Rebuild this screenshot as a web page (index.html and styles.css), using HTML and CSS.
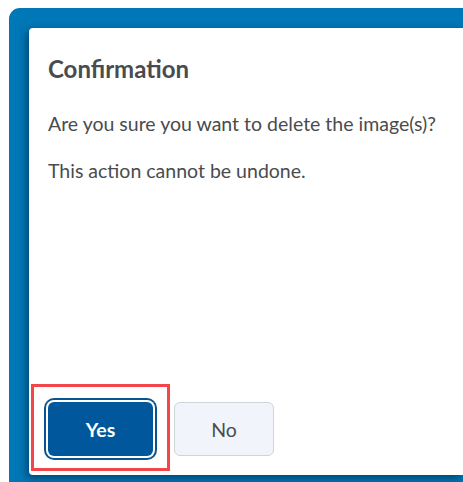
FILE: index.html
```html
<!DOCTYPE html>
<html lang="en">
<head>
<meta charset="utf-8">
<title>Confirmation</title>
<link rel="stylesheet" href="styles.css">
</head>
<body>
<div class="backdrop">
  <div class="dialog">
    <h1 class="title">Confirmation</h1>
    <p class="msg">Are you sure you want to delete the image(s)?</p>
    <p class="msg">This action cannot be undone.</p>
    <div class="footer">
      <div class="highlight">
        <button class="btn btn-primary">Yes</button>
      </div>
      <button class="btn btn-secondary">No</button>
    </div>
  </div>
</div>
</body>
</html>
```
FILE: styles.css
```css
html, body {
  margin: 0;
  padding: 0;
  background: #ffffff;
  overflow: hidden;
}
body {
  width: 463px;
  height: 482px;
  font-family: Lato, "Noto Sans", sans-serif;
  color: #494c4e;
}
.backdrop {
  margin: 8px 0 0 9px;
  height: 474px;
  background: #0077b6;
  border-top-left-radius: 11px;
  padding: 20px 0 0 20px;
  box-sizing: border-box;
  display: flex;
  flex-direction: column;
}
.dialog {
  background: #ffffff;
  height: 447px;
  border-radius: 4px 0 0 4px;
  box-shadow: -2px 3px 8px rgba(0, 20, 50, 0.55);
  padding: 0 0 4px 19px;
  box-sizing: border-box;
  display: flex;
  flex-direction: column;
}
.title {
  margin: 26px 0 0 0;
  font-size: 24px;
  font-weight: 700;
  line-height: 29px;
  color: #494c4e;
  white-space: nowrap;
}
.msg {
  margin: 29px 0 0 0;
  font-size: 19.5px;
  line-height: 23px;
  font-weight: 400;
  white-space: nowrap;
}
.msg + .msg {
  margin-top: 24px;
}
.footer {
  margin-top: auto;
  margin-left: -17px;
  display: flex;
  align-items: flex-start;
}
.highlight {
  border: 3px solid #f2464b;
  padding: 15px 14px 12px 14px;
  display: flex;
}
.btn {
  font-family: Lato, "Noto Sans", sans-serif;
  font-size: 19.5px;
  height: 54px;
  border-radius: 6px;
  cursor: pointer;
  padding: 0;
}
.btn-primary {
  width: 105px;
  background: #00579b;
  color: #ffffff;
  font-weight: 700;
  border: none;
  box-shadow: 0 0 0 2px #ffffff, 0 0 0 4px #0a558f;
}
.btn-secondary {
  width: 100px;
  margin: 18px 0 0 4px;
  background: #f1f5fb;
  color: #494c4e;
  font-weight: 400;
  border: 1px solid #cdd5dc;
}
```
